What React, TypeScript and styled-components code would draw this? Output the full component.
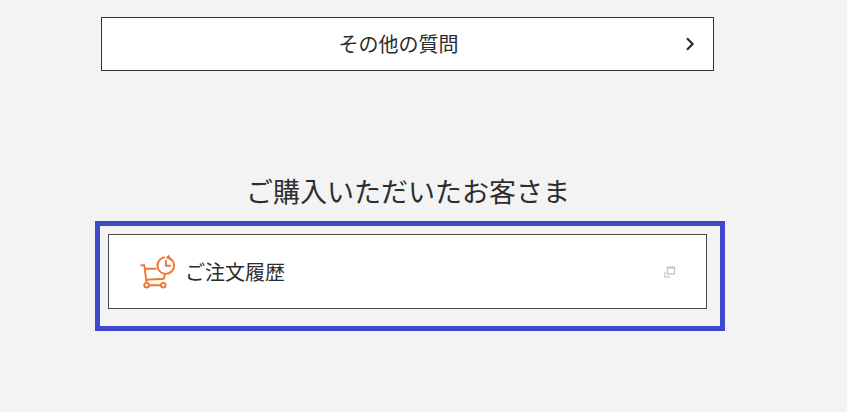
import React from "react";
import styled, { createGlobalStyle } from "styled-components";

const GlobalStyle = createGlobalStyle`
  *, *::before, *::after {
    box-sizing: border-box;
  }
  body {
    margin: 0;
    background: #f3f3f3;
    color: #2d2d2d;
    font-family: "Noto Sans CJK JP", "Noto Sans", sans-serif;
  }
`;

const Page = styled.main`
  display: flex;
  flex-direction: column;
  padding: 17px 122px 32px 95px;
`;

const CardLink = styled.a`
  display: flex;
  align-items: center;
  background: #fff;
  border: 1px solid #333;
  color: inherit;
  font-size: 20px;
  line-height: 30px;
  text-decoration: none;
`;

const QuestionLink = styled(CardLink)`
  min-height: 54px;
  margin: 0 11px 0 6px;
  padding: 0 18px 0 10px;
`;

const QuestionLabel = styled.span`
  flex: 1;
  text-align: center;
`;

const Customers = styled.section`
  margin-top: 100px;
`;

const Heading = styled.h2`
  margin: 0 4px 10px 0;
  font-size: 27px;
  font-weight: 400;
  line-height: 40px;
  text-align: center;
`;

const Highlight = styled.div`
  border: 5px solid #3f48cc;
  padding: 8px 13px 17px 8px;
`;

const HistoryLink = styled(CardLink)`
  min-height: 75px;
  padding: 0 30px 0 31px;
  gap: 9px;
  border-color: #484848;
`;

const HistoryLabel = styled.span`
  flex: 1;
`;

function ChevronIcon() {
  return (
    <svg width="10" height="14" viewBox="0 0 10 14" fill="none" aria-hidden="true">
      <path d="M2 1.2 7.6 7 2 12.8" stroke="#2d2d2d" strokeWidth="2.2" />
    </svg>
  );
}

function CartHistoryIcon() {
  return (
    <svg
      width="36"
      height="36"
      viewBox="0 0 36 36"
      fill="none"
      stroke="#f27630"
      strokeWidth="1.9"
      strokeLinecap="round"
      strokeLinejoin="round"
      aria-hidden="true"
    >
      <path d="M1.2 11.3h3.1l2.200 17.200" />
      <path d="M5.300 14.800h10.400" />
      <path d="M6.500 25.800l17.300-1 1-4.300" />
      <path d="M9.300 31.200h10.800" />
      <circle cx="6.600" cy="31.200" r="2.300" fill="#fff" />
      <circle cx="23.300" cy="31.200" r="2.300" fill="#fff" />
      <path d="M29.800 4.300A8.300 8.300 0 1 1 24.200 3.400" />
      <path d="M25.900 6.600v5.100h4.100" />
      <path d="M26.600 3.300l2.500-2 .5 3.800z" fill="#f27630" strokeWidth="1" />
    </svg>
  );
}

function NewWindowIcon() {
  return (
    <svg width="12" height="12" viewBox="0 0 12 12" fill="none" aria-hidden="true">
      <path d="M1 6v5h5" stroke="#cfcfcf" strokeWidth="1.500" />
      <path d="M3.500 1.500h7v6.500h-7z" stroke="#c6c6c6" strokeWidth="1.300" />
      <path d="M3 1.500h8" stroke="#c6c6c6" strokeWidth="2" />
    </svg>
  );
}

export default function App() {
  return (
    <>
      <GlobalStyle />
      <Page>
        <QuestionLink href="#questions">
          <QuestionLabel>その他の質問</QuestionLabel>
          <ChevronIcon />
        </QuestionLink>
        <Customers>
          <Heading>ご購入いただいたお客さま</Heading>
          <Highlight>
            <HistoryLink href="#orders">
              <CartHistoryIcon />
              <HistoryLabel>ご注文履歴</HistoryLabel>
              <NewWindowIcon />
            </HistoryLink>
          </Highlight>
        </Customers>
      </Page>
    </>
  );
}
